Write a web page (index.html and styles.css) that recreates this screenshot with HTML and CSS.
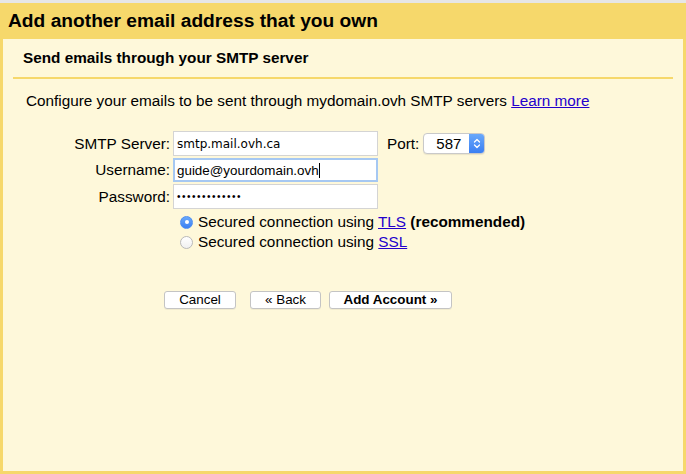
FILE: index.html
```html
<!DOCTYPE html>
<html>
<head>
<meta charset="utf-8">
<link rel="stylesheet" href="styles.css">
</head>
<body>
<div class="topstrip"></div>
<div class="dialog">
  <h1 class="title">Add another email address that you own</h1>
  <div class="panel">
    <h2 class="subtitle">Send emails through your SMTP server</h2>
    <div class="rule"></div>
    <p class="desc">Configure your emails to be sent through mydomain.ovh SMTP servers <a href="#" class="link">Learn more</a></p>
    <div class="form">
      <label class="lbl">SMTP Server:</label>
      <div class="field"><input class="inp inp-server" type="text" value="smtp.mail.ovh.ca"></div>
      <div class="port">
        <span class="port-lbl">Port:</span>
        <span class="select"><span class="select-val">587</span><span class="select-arrow"><svg width="8" height="11" viewBox="0 0 8 11"><path d="M1.5 4 L4 1.5 L6.5 4 M1.5 7 L4 9.5 L6.5 7" fill="none" stroke="#fff" stroke-width="1.3" stroke-linecap="round" stroke-linejoin="round"/></svg></span></span>
      </div>
      <label class="lbl">Username:</label>
      <div class="field"><div class="inp inp-focus">guide@yourdomain.ovh<span class="caret"></span></div></div>
      <div></div>
      <label class="lbl">Password:</label>
      <div class="field"><div class="inp inp-pass">•••••••••••••</div></div>
      <div></div>
    </div>
    <div class="radios">
      <div class="radio-row"><span class="radio radio-on"></span><span>Secured connection using <a href="#" class="link">TLS</a> <b>(recommended)</b></span></div>
      <div class="radio-row"><span class="radio"></span><span>Secured connection using <a href="#" class="link">SSL</a></span></div>
    </div>
    <div class="buttons">
      <button class="btn btn-cancel">Cancel</button>
      <button class="btn btn-back">« Back</button>
      <button class="btn btn-add">Add Account »</button>
    </div>
  </div>
</div>
</body>
</html>
```

FILE: styles.css
```css
* { box-sizing: border-box; }
html, body { margin: 0; padding: 0; }
body {
  width: 686px;
  height: 474px;
  background: #e9e9e9;
  font-family: "Liberation Sans", Arial, sans-serif;
  font-size: 15.3px;
  color: #000;
  overflow: hidden;
}
.topstrip { height: 3px; background: #e6e6e6; }
.dialog {
  background: #f6d86b;
  padding: 0 3px 3px 3px;
  height: 471px;
  display: flex;
  flex-direction: column;
}
.title {
  margin: 0;
  height: 36px;
  line-height: 36px;
  padding-left: 5px;
  font-size: 19.2px;
  font-weight: bold;
  flex: none;
}
.panel {
  flex: 1;
  background: #fef8da;
  padding: 0 10px;
}
.subtitle {
  margin: 0;
  font-size: 15.3px;
  font-weight: bold;
  padding: 10px 0 0 10px;
  height: 38px;
  line-height: 18px;
}
.rule { height: 2px; background: #f6d86b; }
.desc {
  margin: 0;
  padding: 13px 0 0 13px;
  height: 52px;
  line-height: 18px;
}
.link { color: #2200cc; text-decoration: underline; }
.form {
  display: grid;
  grid-template-columns: 157px 205px auto;
  row-gap: 2px;
  column-gap: 3px;
  align-items: center;
}
.lbl { text-align: right; }
.inp {
  display: block;
  width: 205px;
  height: 25px;
  border: 1px solid #d4d4d4;
  background: #fff;
  padding: 0 3px;
  font-family: "Liberation Sans", Arial, sans-serif;
  font-size: 13.4px;
  line-height: 23px;
  color: #000;
  outline: none;
  margin: 0;
}
.inp-server { font-family: "DejaVu Sans", Verdana, sans-serif; font-size: 12px; }
.inp-focus {
  border: 2px solid #a6c8f2;
  padding: 0 2px;
  line-height: 21px;
  height: 24px;
}
.caret { display: inline-block; width: 1px; height: 15px; background: #000; vertical-align: -3px; }
.inp-pass { font-size: 10px; letter-spacing: 1.5px; line-height: 23px; }
.port { display: flex; align-items: center; gap: 4px; padding-left: 6px; }
.select {
  display: inline-flex;
  width: 62px;
  height: 21px;
  border: 1px solid #c9c9c9;
  border-radius: 4px;
  background: #fff;
  overflow: hidden;
  box-shadow: 0 1px 1px rgba(0,0,0,0.08);
}
.select-val { flex: 1; font-size: 15px; line-height: 19px; padding-left: 12px; }
.select-arrow {
  width: 15px;
  background: linear-gradient(#6aa9fb, #3a7ff2);
  display: flex;
  align-items: center;
  justify-content: center;
}
.radios { padding: 4px 0 0 167px; display: flex; flex-direction: column; gap: 2px; }
.radio-row { display: flex; align-items: center; gap: 5px; height: 18px; }
.radio {
  width: 13px;
  height: 13px;
  border-radius: 50%;
  border: 1px solid #b9b9b9;
  background: linear-gradient(#ffffff, #f0f0f0);
  flex: none;
  position: relative;
}
.radio-on {
  border-color: #4d8ef2;
  background: linear-gradient(#6aa9fb, #3a7ff2);
}
.radio-on::after {
  content: "";
  position: absolute;
  left: 3.5px; top: 3.5px;
  width: 4px; height: 4px;
  border-radius: 50%;
  background: #fff;
}
.buttons { padding: 40px 0 0 151px; display: flex; gap: 14px; }
.btn {
  height: 18px;
  border: 1px solid #c4c4c4;
  border-radius: 3px;
  background: #fff;
  font-family: "Liberation Sans", Arial, sans-serif;
  font-size: 13.4px;
  line-height: 16px;
  padding: 0;
  color: #000;
  box-shadow: 0 1px 0 rgba(0,0,0,0.05);
}
.btn-cancel { width: 72px; }
.btn-back { width: 71px; }
.btn-add { width: 123px; font-weight: bold; margin-left: -6px; }
```
